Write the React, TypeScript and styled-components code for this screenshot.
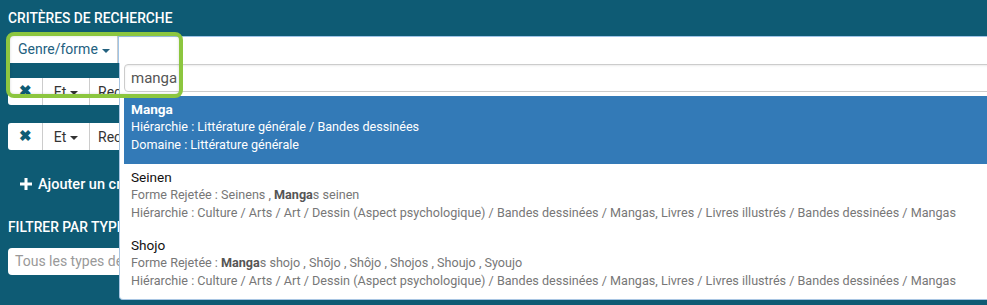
import React from 'react'
import styled, { createGlobalStyle } from 'styled-components';

const GlobalStyle = createGlobalStyle`
  html, body {
    margin: 0;
    padding: 0;
    overflow: hidden;
    background: #0e5b74;
  }
`;

const Page = styled.div`
  position: relative;
  width: 987px;
  height: 305px;
  overflow: hidden;
  background: #0e5b74;
  font-family: Roboto, "Liberation Sans", sans-serif;
  padding: 8px 0 0 8px;
  box-sizing: border-box;
  display: flex;
  flex-direction: column;
`;

const SectionTitle = styled.div`
  color: #fff;
  font-size: 13.8px;
  font-weight: 500;
  line-height: 20px;
  text-transform: uppercase;
  margin-bottom: ${(p: { $gap: number }) => p.$gap}px;
`;

const GenreRow = styled.div`
  position: relative;
  display: flex;
  height: 27px;
  margin-right: -20px;
  margin-bottom: 15px;
`;

const GenreButton = styled.div`
  width: 110px;
  box-sizing: border-box;
  background: #fff;
  border-right: 1px solid #ccc;
  color: #23617f;
  font-size: 14px;
  line-height: 27px;
  padding-left: 10px;
  display: flex;
  align-items: center;
  gap: 4px;
`;

const Caret = styled.span`
  display: inline-block;
  width: 0;
  height: 0;
  border-left: 4px solid transparent;
  border-right: 4px solid transparent;
  border-top: 4px solid currentColor;
  margin-top: 2px;
`;

const Selection = styled.div`
  flex: 1;
  background: #fff;
  border-top: 1px solid #9ec4e8;
  border-left: 1px solid #9ec4e8;
`;

const Dropdown = styled.div`
  position: absolute;
  top: 27px;
  left: 111px;
  right: 0;
  height: 237px;
  background: #fff;
  border: 1px solid #a9c6e3;
  border-top: none;
  border-radius: 0 0 4px 4px;
  padding: 1px 4px 0 4px;
  box-sizing: border-box;
  overflow: hidden;
  z-index: 2;
`;

const SearchField = styled.div`
  height: 28px;
  box-sizing: border-box;
  border: 1px solid #ccc;
  border-radius: 4px;
  box-shadow: inset 0 1px 2px rgba(0, 0, 0, 0.08);
  color: #555;
  font-size: 15px;
  line-height: 26px;
  padding-left: 6px;
  margin-bottom: 4px;
`;

const Option = styled.div<{ $active?: boolean }>`
  padding: 4px 7px 10px 7px;
  background: ${(p) => (p.$active ? '#337ab7' : '#fff')};
  color: ${(p) => (p.$active ? '#fff' : '#777')};
  font-size: 12.6px;
  line-height: 18px;
  white-space: nowrap;
`;

const OptionTitle = styled.div<{ $active?: boolean }>`
  font-size: 13.6px;
  font-weight: ${(p) => (p.$active ? 700 : 400)};
  color: ${(p) => (p.$active ? '#fff' : '#111')};
`;

const Hit = styled.b`
  color: #555;
  font-weight: 700;
`;

const CriterionRow = styled.div`
  display: flex;
  height: 27px;
  margin-bottom: ${(p: { $gap: number }) => p.$gap}px;
`;

const RowButton = styled.div<{ $width?: number }>`
  background: #fff;
  border-right: 1px solid #ccc;
  width: ${(p) => (p.$width ? `${p.$width}px` : 'auto')};
  flex: ${(p) => (p.$width ? '0 0 auto' : '1')};
  display: flex;
  align-items: center;
  justify-content: ${(p) => (p.$width ? 'center' : 'flex-start')};
  gap: 4px;
  padding-left: ${(p) => (p.$width ? 0 : 8)}px;
  color: #333;
  font-size: 14px;
  &:first-child {
    border-radius: 3px 0 0 3px;
  }
`;

const RemoveIcon = styled.span`
  color: #0e5b74;
  font-size: 15px;
  font-weight: 700;
  line-height: 1;
`;

const AddLink = styled.div`
  display: flex;
  align-items: center;
  gap: 6px;
  padding-left: 12px;
  color: #fff;
  font-size: 14.5px;
  font-weight: 500;
  height: 20px;
  margin-bottom: 23px;
`;

const TypeInput = styled.div`
  width: 200px;
  height: 27px;
  box-sizing: border-box;
  background: #fff;
  border-radius: 4px;
  color: #999;
  font-size: 14px;
  line-height: 27px;
  padding-left: 7px;
`;

const Highlight = styled.div`
  position: absolute;
  left: 6px;
  top: 32px;
  width: 177px;
  height: 66px;
  box-sizing: border-box;
  border: 4px solid #8cc63f;
  border-radius: 8px;
  box-shadow: inset 0 0 3px rgba(0, 0, 0, 0.15);
  z-index: 3;
  pointer-events: none;
`;

function PlusIcon() {
  return (
    <svg width="12" height="12" viewBox="0 0 12 12">
      <path d="M4.5 0h3v4.5H12v3H7.5V12h-3V7.5H0v-3h4.5z" fill="#fff" />
    </svg>
  );
}

function App() {
  return (
    <Page>
      <GlobalStyle />
      <SectionTitle $gap={8}>Critères de recherche</SectionTitle>

      <GenreRow>
        <GenreButton>
          Genre/forme <Caret />
        </GenreButton>
        <Selection />
        <Dropdown>
          <SearchField>manga</SearchField>
          <Option $active>
            <OptionTitle $active>Manga</OptionTitle>
            <div>Hiérarchie : Littérature générale / Bandes dessinées</div>
            <div>Domaine : Littérature générale</div>
          </Option>
          <Option>
            <OptionTitle>Seinen</OptionTitle>
            <div>Forme Rejetée : Seinens , <Hit>Manga</Hit>s seinen</div>
            <div>Hiérarchie : Culture / Arts / Art / Dessin (Aspect psychologique) / Bandes dessinées / Mangas, Livres / Livres illustrés / Bandes dessinées / Mangas</div>
          </Option>
          <Option>
            <OptionTitle>Shojo</OptionTitle>
            <div>Forme Rejetée : <Hit>Manga</Hit>s shojo , Shōjo , Shôjo , Shojos , Shoujo , Syoujo</div>
            <div>Hiérarchie : Culture / Arts / Art / Dessin (Aspect psychologique) / Bandes dessinées / Mangas, Livres / Livres illustrés / Bandes dessinées / Mangas</div>
          </Option>
        </Dropdown>
      </GenreRow>

      <CriterionRow $gap={18}>
        <RowButton $width={34}><RemoveIcon>✖</RemoveIcon></RowButton>
        <RowButton $width={46}>Et <Caret /></RowButton>
        <RowButton>Rechercher dans</RowButton>
      </CriterionRow>
      <CriterionRow $gap={24}>
        <RowButton $width={34}><RemoveIcon>✖</RemoveIcon></RowButton>
        <RowButton $width={46}>Et <Caret /></RowButton>
        <RowButton>Rechercher dans</RowButton>
      </CriterionRow>

      <AddLink>
        <PlusIcon />
        Ajouter un critère
      </AddLink>

      <SectionTitle $gap={11}>Filtrer par type</SectionTitle>
      <TypeInput>Tous les types de supports</TypeInput>

      <Highlight />
    </Page>
  )
}

export default App
